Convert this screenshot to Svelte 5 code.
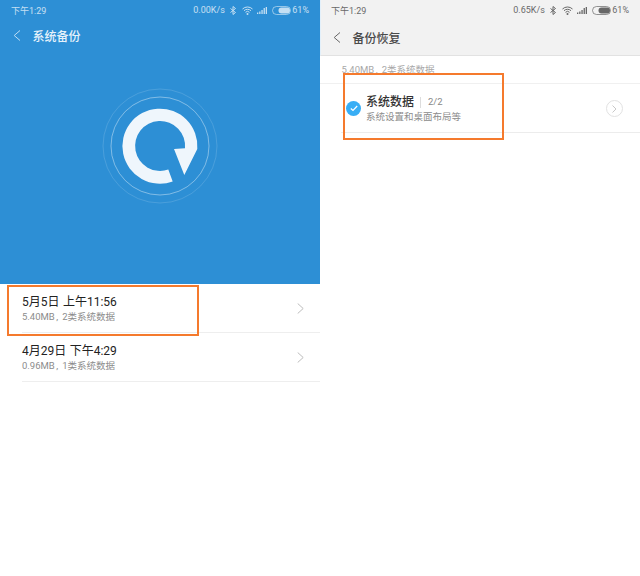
<script>
  const records = [
    { title: '5月5日 上午11:56', size: '5.40MB', kinds: '2类系统数据' },
    { title: '4月29日 下午4:29', size: '0.96MB', kinds: '1类系统数据' }
  ];
</script>

{#snippet status(speed)}
  <div class="status">
    <span>下午1:29</span>
    <div class="status-right">
      <span class="speed">{speed}</span>
      <svg class="bt" width="6" height="9" viewBox="0 0 6 9" fill="none" stroke="currentColor" stroke-width="1"><path d="M.5 2.500l5 4-2.500 2V.5l2.500 2-5 4" /></svg>
      <svg class="wifi" width="11" height="9" viewBox="0 0 11 9" fill="none" stroke="currentColor" stroke-width="1"><path d="M.5 3a7.200 7.200 0 0 1 10 0M2 4.700a5 5 0 0 1 7 0M3.500 6.300a2.800 2.800 0 0 1 4 0" /><circle cx="5.500" cy="7.900" r="1" fill="currentColor" stroke="none" /></svg>
      <svg class="signal" width="10" height="7" viewBox="0 0 10 7" fill="currentColor"><path d="M0 5.500h1.300V7H0zM2.200 4.500h1.300V7H2.200zM4.400 3h1.300v4H4.400zM6.600 1h1.300v6H6.600zM8.700 0H10v7H8.700z" /></svg>
      <svg class="battery" width="19" height="9" viewBox="0 0 19 9"><rect x=".5" y=".5" width="18" height="8" rx="4" fill="none" stroke="currentColor" stroke-width=".7" /><rect x="6.500" y="1.500" width="11.500" height="6" rx="3" fill="currentColor" /></svg>
      <span>61%</span>
    </div>
  </div>
{/snippet}

{#snippet back(color)}
  <svg class="back" width="8" height="11" viewBox="0 0 8 11" fill="none" stroke={color} stroke-width="1"><path d="M7 .5L1.200 5.500 7 10.500" /></svg>
{/snippet}

<div class="page">
  <section class="pane">
    <div class="hero">
      {@render status('0.00K/s')}
      <div class="bar">
        {@render back('#bcdcf3')}
        <span>系统备份</span>
      </div>
      <div class="logo">
        <svg width="120" height="120" viewBox="100 86 120 120">
          <circle cx="160" cy="146" r="57" fill="none" stroke="#fff" stroke-opacity=".14" />
          <circle cx="160" cy="146" r="49" fill="none" stroke="#fff" stroke-opacity=".4" />
          <path fill="#eff6fc" d="M197.300 149 A37.500 37.500 0 1 0 172.700 181.400 L168.300 169.600 A25 25 0 1 1 185 148.300 L174 149 L184.300 175 Z" />
        </svg>
      </div>
    </div>
    <ul class="list">
      {#each records as r}
        <li>
          <div class="row">
            <div class="texts">
              <div class="title">{r.title}</div>
              <div class="sub">{r.size}<span class="comma">,</span>{r.kinds}</div>
            </div>
            <svg width="7" height="11" viewBox="0 0 7 11" fill="none" stroke="#bdbdbd" stroke-width="1"><path d="M.7.500L6.200 5.500.7 10.500" /></svg>
          </div>
        </li>
      {/each}
    </ul>
    <div class="mark mark-left"></div>
  </section>

  <section class="pane">
    <div class="top">
      {@render status('0.65K/s')}
      <div class="bar bar-right">
        {@render back('#666')}
        <span>备份恢复</span>
      </div>
    </div>
    <div class="crumb">5.40MB<span class="comma">,</span>2类系统数据</div>
    <div class="item">
      <span class="check">
        <svg width="8" height="7" viewBox="0 0 8 7" fill="none" stroke="#fff" stroke-width="1.200"><path d="M.8 3.500l2.200 2L7.200 1" /></svg>
      </span>
      <div class="item-texts">
        <div class="item-title"><span>系统数据</span><i></i><em>2/2</em></div>
        <div class="sub">系统设置和桌面布局等</div>
      </div>
      <span class="go">
        <svg width="5" height="8" viewBox="0 0 5 8" fill="none" stroke="#c8c8c8" stroke-width="1"><path d="M.5.500L4 4 .5 7.500" /></svg>
      </span>
    </div>
    <div class="mark mark-right"></div>
  </section>
</div>

<style>
  :global(body) {
    margin: 0;
    background: #fff;
  }
  .page {
    display: flex;
    width: 640px;
    height: 576px;
    font-family: "Roboto", "Noto Sans CJK SC", sans-serif;
    overflow: hidden;
  }
  .pane {
    position: relative;
    width: 320px;
    flex: none;
  }
  .hero {
    height: 284px;
    background: #2d8fd5;
    color: #fff;
    box-sizing: border-box;
  }
  .status {
    height: 20px;
    padding: 0 11px;
    display: flex;
    align-items: center;
    justify-content: space-between;
    font-size: 9px;
    opacity: .72;
  }
  .top .status {
    padding-left: 10px;
  }
  .status-right {
    display: flex;
    align-items: center;
  }
  .bt {
    margin: 0 6px 0 5px;
  }
  .signal {
    margin: 0 5px 0 4px;
  }
  .battery {
    margin-right: 1.500px;
  }
  .bar {
    height: 30px;
    padding-left: 13px;
    display: flex;
    align-items: center;
    gap: 11.500px;
    font-size: 12px;
    font-weight: 500;
    color: #e6f2fb;
  }
  .logo {
    display: flex;
    justify-content: center;
    padding-top: 36px;
  }
  .list {
    list-style: none;
    margin: 0;
    padding: 0;
  }
  .list li {
    padding-left: 22px;
  }
  .row {
    height: 49px;
    box-sizing: border-box;
    border-bottom: 1px solid #eeeeee;
    display: flex;
    align-items: center;
    justify-content: space-between;
    padding: 1px 16px 0 0;
  }
  .title {
    font-size: 12px;
    line-height: 15px;
    color: #222;
    word-spacing: .5px;
  }
  .sub {
    font-size: 9.500px;
    line-height: 13px;
    color: #8c8c8c;
  }
  .comma {
    margin: 0 4px 0 1.500px;
  }
  .top {
    height: 56px;
    background: #f2f2f2;
    border-bottom: 1px solid #e2e2e2;
    border-left: 1px solid #e3f0fa;
    color: #333;
    box-sizing: border-box;
  }
  .bar-right {
    height: 35px;
    color: #4a4a4a;
    padding-left: 12px;
  }
  .crumb {
    height: 28px;
    padding: 7px 0 0 21.500px;
    box-sizing: border-box;
    font-size: 9.500px;
    line-height: 14px;
    color: #a8a8a8;
    border-bottom: 1px solid #f0f0f0;
  }
  .item {
    height: 49px;
    box-sizing: border-box;
    border-bottom: 1px solid #ececec;
    margin-left: 21px;
    display: flex;
    align-items: center;
    padding: 1px 17px 0 0;
  }
  .check {
    width: 15px;
    height: 15px;
    border-radius: 50%;
    background: #38aef5;
    display: flex;
    align-items: center;
    justify-content: center;
    margin: 0 5px;
    flex: none;
  }
  .item-texts {
    flex: 1;
  }
  .item-title {
    display: flex;
    align-items: center;
    font-size: 12px;
    font-weight: 500;
    line-height: 16px;
    color: #333;
  }
  .item-title i {
    width: 1px;
    height: 11px;
    background: #ddd;
    margin: 0 7px 0 6px;
  }
  .item-title em {
    font-style: normal;
    font-weight: 400;
    font-size: 9.500px;
    color: #888;
  }
  .go {
    width: 17px;
    height: 17px;
    box-sizing: border-box;
    border: 1px solid #e2e2e2;
    border-radius: 50%;
    display: flex;
    align-items: center;
    justify-content: center;
  }
  .mark {
    position: absolute;
    box-sizing: border-box;
    border: 2.500px solid #f57a2d;
  }
  .mark-left {
    left: 7px;
    top: 285px;
    width: 192px;
    height: 51px;
  }
  .mark-right {
    left: 23px;
    top: 73px;
    width: 161px;
    height: 67px;
  }
</style>
